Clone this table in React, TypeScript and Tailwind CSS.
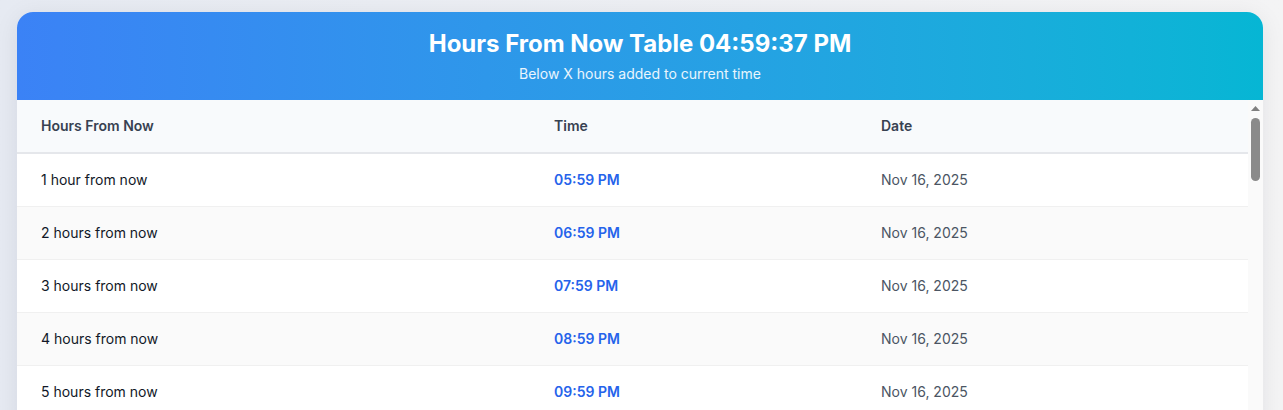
import React from 'react';

const BASE_H = 16;
const BASE_M = 59;

const months = ['Jan', 'Feb', 'Mar', 'Apr', 'May', 'Jun', 'Jul', 'Aug', 'Sep', 'Oct', 'Nov', 'Dec'];

function buildRows(count: number) {
  const rows: { label: string; time: string; date: string }[] = [];
  for (let i = 1; i <= count; i++) {
    const d = new Date(2025, 10, 16, BASE_H + i, BASE_M, 37);
    const h24 = d.getHours();
    const h12 = h24 % 12 === 0 ? 12 : h24 % 12;
    const ampm = h24 < 12 ? 'AM' : 'PM';
    const time = `${String(h12).padStart(2, '0')}:${String(d.getMinutes()).padStart(2, '0')} ${ampm}`;
    const date = `${months[d.getMonth()]} ${d.getDate()}, ${d.getFullYear()}`;
    rows.push({ label: `${i} ${i === 1 ? 'hour' : 'hours'} from now`, time, date });
  }
  return rows;
}

const rows = buildRows(72);

// Drawn scrollbar, matching the classic one in the screenshot
const ScrollRail: React.FC = () => (
  <div className="flex w-[15px] shrink-0 flex-col items-center bg-[#fafafa]">
    <svg width="9" height="5" viewBox="0 0 9 5" className="mt-[6px]">
      <path d="M4.5 0 L9 5 L0 5 Z" fill="#7f7f7f" />
    </svg>
    <div className="mt-[7px] h-[63px] w-[9px] rounded-full bg-[#8a8a8a]" />
  </div>
);

const App: React.FC = () => {
  return (
    <div className="h-screen overflow-hidden bg-gradient-to-r from-[#e6eaf2] to-[#f4f4f5] font-['Inter','Liberation_Sans',sans-serif]">
      <div className="pt-3 pl-[17px]">
        {/* Card */}
        <div className="w-[1246px] overflow-hidden rounded-2xl bg-white shadow-[0_4px_24px_rgba(15,23,42,0.08)]">
          {/* Header */}
          <div className="flex h-[88px] flex-col items-center justify-center bg-gradient-to-r from-[#3b82f6] to-[#06b6d4] text-white">
            <h1 className="text-2xl leading-8 font-bold">Hours From Now Table 04:59:37 PM</h1>
            <p className="mt-1 text-sm leading-5 text-white/90">Below X hours added to current time</p>
          </div>

          {/* Table + scrollbar */}
          <div className="flex h-[500px]">
            <div className="min-w-0 flex-1 overflow-hidden">
              <table className="w-full table-fixed border-collapse text-left text-sm">
                <thead className="bg-[#f8fafc]">
                  <tr className="border-b-2 border-[#e5e7eb]">
                    <th className="w-[513px] px-6 py-4 leading-5 font-semibold text-[#374151]">Hours From Now</th>
                    <th className="w-[327px] px-6 py-4 leading-5 font-semibold text-[#374151]">Time</th>
                    <th className="px-6 py-4 leading-5 font-semibold text-[#374151]">Date</th>
                  </tr>
                </thead>
                <tbody>
                  {rows.map((r, i) => (
                    <tr key={r.label} className={`border-b border-[#f0f0f0] ${i % 2 === 1 ? 'bg-[#fafafa]' : 'bg-white'}`}>
                      <td className="px-6 py-4 leading-5 text-[#111827]">{r.label}</td>
                      <td className="px-6 py-4 leading-5 font-semibold text-[#2563eb]">{r.time}</td>
                      <td className="px-6 py-4 leading-5 text-[#4b5563]">{r.date}</td>
                    </tr>
                  ))}
                </tbody>
              </table>
            </div>
            <ScrollRail />
          </div>
        </div>
      </div>
    </div>
  );
};

export default App;
